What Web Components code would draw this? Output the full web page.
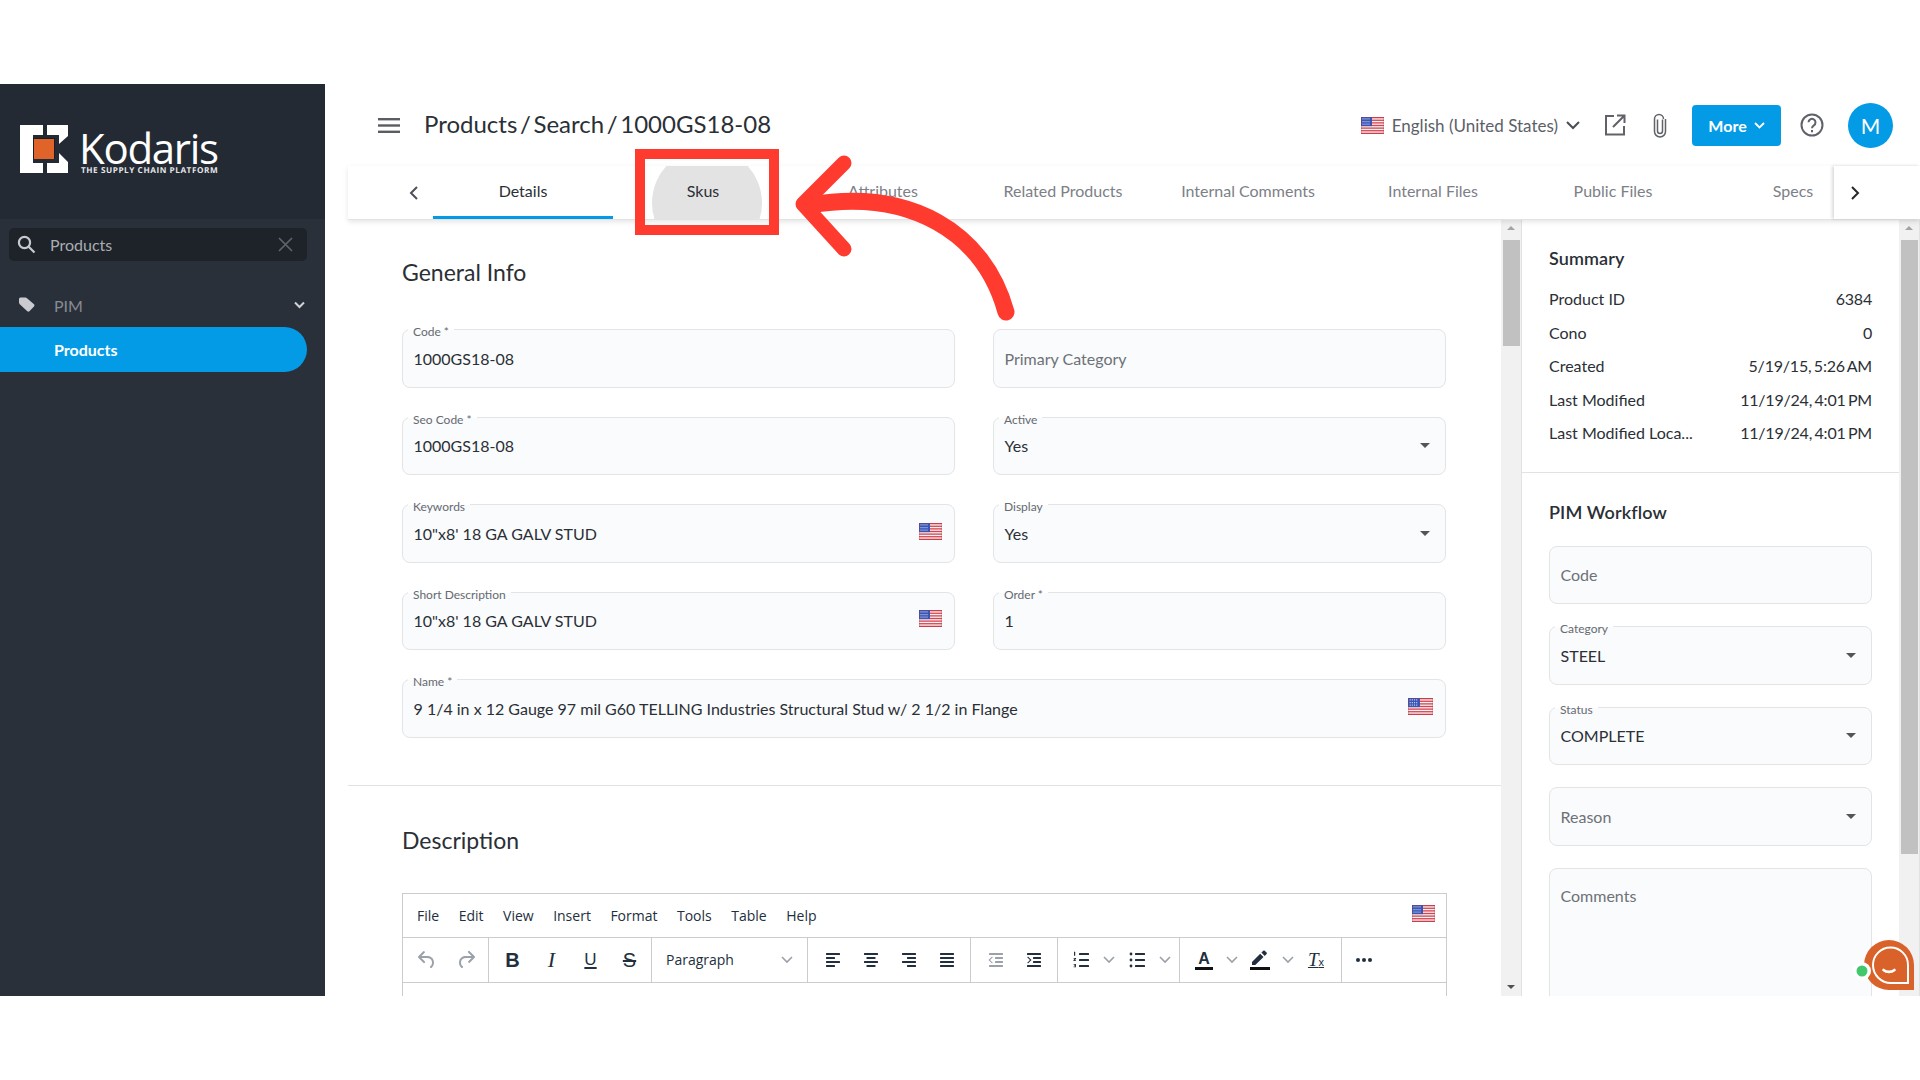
<!DOCTYPE html>
<html>
<head>
<meta charset="utf-8">
<title>Kodaris</title>
<style>
  html, body { margin: 0; padding: 0; background: #fff; }
  body { padding: 84px 0; font-family: "Open Sans", "Liberation Sans", sans-serif; overflow: hidden; }
</style>
</head>
<body>
<kd-app>
  <kd-sidebar slot="side"></kd-sidebar>
  <kd-header slot="head" title="Products / Search / 1000GS18-08"></kd-header>
  <kd-tabs slot="head"></kd-tabs>
  <kd-scroll slot="left" thumb-top="20" thumb-height="106" width="1174">
    <kd-general></kd-general>
  </kd-scroll>
  <kd-scroll slot="right" thumb-top="20" thumb-height="614" width="398">
    <kd-summary></kd-summary>
  </kd-scroll>
  <kd-annotation slot="over"></kd-annotation>
  <kd-bot slot="over"></kd-bot>
</kd-app>

<script>
  const FONT = '"Lato", "Open Sans", sans-serif';

  // small flag, used in a few places
  const flag = (w, h) => {
    let stripes = '';
    for (let i = 0; i < 7; i++) {
      stripes += `<rect y="${i * 2}" width="23" height="1" fill="#d9434e"/>`;
    }
    return `<svg width="${w}" height="${h}" viewBox="0 0 23 13" preserveAspectRatio="none">
      <rect width="23" height="13" rx="1" fill="#f4f4f6"/>${stripes}
      <rect width="11" height="7" fill="#3a55b4"/>
      <path d="M1.5 1.5h8M1.5 3.5h8M1.5 5.5h8" stroke="#c5d0ee" stroke-width=".9" stroke-dasharray="1 1"/>
      <rect x=".25" y=".25" width="22.5" height="12.5" rx="1" fill="none" stroke="#a8343c" stroke-opacity=".55" stroke-width=".5"/>
    </svg>`;
  };

  customElements.define('kd-app', class extends HTMLElement {
    constructor() {
      super();
      this.attachShadow({ mode: 'open' }).innerHTML = `
        <style>
          :host { display: flex; position: relative; height: 912px; overflow: hidden; background: #fff; }
          .main { flex: 1; min-width: 0; display: flex; flex-direction: column; }
          .body { flex: 1; min-height: 0; display: flex; padding-left: 23px; }
        </style>
        <slot name="side"></slot>
        <div class="main">
          <slot name="head"></slot>
          <div class="body">
            <slot name="left"></slot>
            <slot name="right"></slot>
          </div>
        </div>
        <slot name="over"></slot>`;
    }
  });

  customElements.define('kd-sidebar', class extends HTMLElement {
    constructor() {
      super();
      this.attachShadow({ mode: 'open' }).innerHTML = `
        <style>
          :host { display: block; flex: none; width: 325px; background: #2a303a; font-family: ${FONT}; }
          .logo { height: 135px; background: #242a33; display: flex; align-items: flex-start; padding: 41px 0 0 20px; box-sizing: border-box; gap: 11px; }
          .brand { color: #fff; }
          .brand b { display: block; font: 400 42px/34px "Open Sans", sans-serif; letter-spacing: -1.3px; margin-top: 6px; }
          .brand i { display: block; font: 700 8.2px/9px "Open Sans", sans-serif; font-style: normal; text-rendering: geometricPrecision; letter-spacing: .55px; margin: 1px 0 0 2px; color: #e3e5e7; white-space: nowrap; }
          .search { margin: 9px 18px 0 9px; height: 33px; background: #1e2229; border-radius: 5px; display: flex; align-items: center; color: #a9adb3; font-size: 16px; padding: 0 14px 0 8px; }
          .search span { flex: 1; margin-left: 14px; }
          .pim { height: 44px; margin-top: 22px; display: flex; align-items: center; padding: 0 20px 0 18px; color: #878b92; font-size: 16px; }
          .pim span { flex: 1; margin-left: 18px; }
          .item { height: 45px; margin-right: 18px; background: #039be5; border-radius: 0 23px 23px 0; color: #fff; font-weight: 700; font-size: 16px; display: flex; align-items: center; padding-left: 54px; }
        </style>
        <div class="logo">
          <svg width="48" height="48" viewBox="20 125 48 48" fill="#fff">
            <path d="M20 125h23v10H33v28h10v10H20z"/>
            <path d="M47 125h21v11l-9 8v-9H47z"/>
            <path d="M59 153l9 9v11H47v-10h12z"/>
            <path d="M33 138h22v21H33z" fill="#1a1f27"/>
            <rect x="34" y="139" width="20" height="20" fill="#e0642a"/>
          </svg>
          <div class="brand"><b>Kodaris</b><i>THE SUPPLY CHAIN PLATFORM</i></div>
        </div>
        <div class="search">
          <svg width="19" height="19" viewBox="0 0 19 19" fill="none" stroke="#c6c9cd" stroke-width="2.2"><circle cx="7.5" cy="7.5" r="5.6"/><path d="M11.5 11.5l6 6"/></svg>
          <span>Products</span>
          <svg width="15" height="15" viewBox="0 0 15 15" fill="none" stroke="#5f636a" stroke-width="1.7"><path d="M1 1l13 13M14 1L1 14"/></svg>
        </div>
        <div class="pim">
          <svg width="18" height="16" viewBox="0 0 18 16"><path d="M1 5.5V2a1.5 1.5 0 0 1 1.5-1.5h5c.5 0 .9.2 1.2.5l7.3 6.3c.6.6.6 1.5 0 2.1l-4.6 4.9c-.6.6-1.5.6-2.1 0L1.500 7z" fill="#c9cbd0"/></svg>
          <span>PIM</span>
          <svg width="11" height="8" viewBox="0 0 11 8" fill="none" stroke="#d0d2d5" stroke-width="2"><path d="M1 1.500l4.500 4.500L10 1.500"/></svg>
        </div>
        <div class="item">Products</div>`;
    }
  });

  customElements.define('kd-header', class extends HTMLElement {
    constructor() {
      super();
      this.attachShadow({ mode: 'open' }).innerHTML = `
        <style>
          :host { display: flex; align-items: center; height: 82px; padding: 0 27px 0 53px; font-family: ${FONT}; color: #2b2f36; }
          h1 { font-size: 24px; font-weight: 400; margin: -3px 0 0 24px; word-spacing: -3.5px; }
          .actions { margin-left: auto; display: flex; align-items: center; }
          .lang { display: flex; align-items: center; font-size: 17px; color: #5c6068; margin-right: 24px; }
          .lang span { margin: 0 8px; }
          .more { width: 89px; height: 41px; background: #039be5; border-radius: 4px; color: #fff; font-weight: 700; font-size: 16px; display: flex; align-items: center; justify-content: center; gap: 7px; margin: 0 19px 0 25px; }
          .av { width: 45px; height: 45px; border-radius: 50%; background: #039be5; color: #fff; display: flex; align-items: center; justify-content: center; font-size: 21px; margin-left: 24px; }
          svg { display: block; }
        </style>
        <svg width="22" height="15" viewBox="0 0 22 15" fill="#5a5d63"><rect width="22" height="2.400"/><rect y="6.300" width="22" height="2.400"/><rect y="12.600" width="22" height="2.400"/></svg>
        <h1>${this.getAttribute('title')}</h1>
        <div class="actions">
          <div class="lang">${flag(23, 17)}<span>English (United States)</span>
            <svg width="14" height="9" viewBox="0 0 14 9" fill="none" stroke="#4a4d53" stroke-width="2"><path d="M1 1l6 6 6-6"/></svg>
          </div>
          <svg width="22" height="22" viewBox="0 0 22 22" fill="none" stroke="#5f6268" stroke-width="2"><path d="M10 2H2v18.500h18V12"/><path d="M9 13L20.500 1.500M13 1.500h7.500V9"/></svg>
          <svg width="14" height="25" viewBox="0 0 14 25" fill="none" stroke="#5f6268" stroke-width="1.500" style="margin-left:27px"><path d="M9.500 6.500V18a2.500 2.500 0 0 1-5 0V6.500"/><path d="M12.500 6v12.500a5.500 5.500 0 0 1-11 0V6a4.500 4.500 0 0 1 9-0"/></svg>
          <div class="more">More <svg width="11" height="7" viewBox="0 0 11 7" fill="none" stroke="#fff" stroke-width="1.800"><path d="M1 1l4.500 4.500L10 1"/></svg></div>
          <svg width="24" height="24" viewBox="0 0 24 24" fill="none" stroke="#5f6268" stroke-width="2"><circle cx="12" cy="12" r="10.500"/><path d="M8.500 9.300a3.500 3.500 0 1 1 5.400 3c-1.200.8-1.900 1.400-1.900 2.900"/><path d="M12 17v2.200"/></svg>
          <div class="av">M</div>
        </div>`;
    }
  });

  customElements.define('kd-tabs', class extends HTMLElement {
    constructor() {
      super();
      const names = ['Details', 'Skus', 'Attributes', 'Related Products', 'Internal Comments', 'Internal Files', 'Public Files', 'Specs'];
      this.attachShadow({ mode: 'open' }).innerHTML = `
        <style>
          :host { display: flex; position: relative; z-index: 2; height: 54px; margin-left: 23px; background: #fff; font-family: ${FONT}; font-size: 16px; color: #7d8087; box-shadow: 0 2px 5px rgba(0,0,0,.1); border-bottom: 1px solid #e3e3e3; box-sizing: border-box; }
          .back { width: 85px; flex: none; display: flex; align-items: center; justify-content: center; padding-left: 46px; box-sizing: border-box; }
          .strip { display: flex; overflow: hidden; flex: 1; min-width: 0; }
          .tab { flex: 0 0 180px; display: flex; align-items: center; justify-content: center; position: relative; overflow: hidden; box-sizing: border-box; }
          .tab.wide { flex-basis: 190px; }
          .tab span { position: relative; top: -2.500px; }
          .on { color: #2b2f36; border-bottom: 3px solid #039be5; }
          .on span { top: -1px; }
          .hover { color: #2b2f36; }
          .hover::before { content: ""; position: absolute; left: 39px; top: -18px; width: 110px; height: 110px; border-radius: 50%; background: #e3e3e3; }
          .next { width: 86px; flex: none; display: flex; align-items: center; justify-content: center; padding-right: 44px; box-sizing: border-box; box-shadow: -2px 0 3px rgba(0,0,0,.14); background: #fff; position: relative; }
        </style>
        <div class="back"><svg width="10" height="14" viewBox="0 0 10 14" fill="none" stroke="#4d5056" stroke-width="2"><path d="M8 1L2 7l6 6"/></svg></div>
        <div class="strip">${names.map((n, i) => `<div class="tab ${i === 0 ? 'on' : ''} ${i === 1 ? 'hover' : ''} ${i === 4 ? 'wide' : ''}"><span>${n}</span></div>`).join('')}</div>
        <div class="next"><svg width="10" height="14" viewBox="0 0 10 14" fill="none" stroke="#26282c" stroke-width="2"><path d="M2 1l6 6-6 6"/></svg></div>`;
    }
  });

  // a pane with an always visible, old style scrollbar
  customElements.define('kd-scroll', class extends HTMLElement {
    constructor() {
      super();
      const top = this.getAttribute('thumb-top');
      const h = this.getAttribute('thumb-height');
      this.attachShadow({ mode: 'open' }).innerHTML = `
        <style>
          :host { display: flex; flex: none; width: ${this.getAttribute('width')}px; height: 100%; overflow: hidden; }
          .content { flex: 1; min-width: 0; overflow: hidden; }
          .bar { flex: none; width: 21px; box-sizing: border-box; background: #f1f1f1; padding: 0 2px; position: relative; border-right: 1px solid #e2e2e2; }
          .thumb { width: 17px; background: #c1c1c1; margin-top: ${top}px; height: ${h}px; }
          .up, .down { position: absolute; left: 6px; width: 0; height: 0; border: 4.500px solid transparent; }
          .up { top: 2px; border-bottom-color: #a3a3a3; }
          .down { bottom: 3px; border-top-color: #505050; }
        </style>
        <div class="content"><slot></slot></div>
        <div class="bar"><i class="up"></i><div class="thumb"></div><i class="down"></i></div>`;
    }
  });

  customElements.define('kd-field', class extends HTMLElement {
    constructor() {
      super();
      const label = this.getAttribute('label');
      const value = this.getAttribute('value');
      const hint = this.getAttribute('hint');
      const tall = this.hasAttribute('tall');
      this.attachShadow({ mode: 'open' }).innerHTML = `
        <style>
          :host { display: block; position: relative; height: ${tall ? 160 : 58.5}px; box-sizing: border-box; background: #fafbfc; border: 1px solid #e3e4e6; border-radius: 8px; font-family: ${FONT}; font-size: 16px; color: #2b2f36; }
          .label { position: absolute; left: 5px; top: -6px; padding: 0 5px; font-size: 12px; line-height: 15px; color: #666a71; background: linear-gradient(#fff 40%, #fafbfc 40%); }
          .row { display: flex; align-items: center; height: 56px; padding: 0 10px 0 10.500px; gap: 10px; }
          .val { flex: 1; white-space: nowrap; }
          .hint { color: #6d7178; }
          .tall { align-items: flex-start; padding-top: 17px; height: auto; }
          .caret { width: 0; height: 0; border: 5px solid transparent; border-top-color: #555; border-bottom: 0; margin-right: 5px; }
          .fl { margin-top: -1px; margin-right: 2px; }
        </style>
        ${label ? `<div class="label">${label}</div>` : ''}
        <div class="row ${tall ? 'tall' : ''}">
          <div class="val ${hint ? 'hint' : ''}">${value || hint}</div>
          ${this.hasAttribute('flag') ? `<div class="fl">${flag(this.getAttribute('flag') === 'l' ? 25 : 23, 17)}</div>` : ''}
          ${this.hasAttribute('select') ? '<i class="caret"></i>' : ''}
        </div>`;
    }
  });

  customElements.define('kd-editor', class extends HTMLElement {
    constructor() {
      super();
      const ink = '#222f3e';
      const off = '#9aa1a9';
      const svg = (body, color = ink) => `<svg width="24" height="24" viewBox="0 0 24 24" fill="${color}">${body}</svg>`;
      const lines = (rows) => rows.map(([x, y, w]) => `<rect x="${x}" y="${y}" width="${w}" height="2" rx=".5"/>`).join('');
      const btn = (inner, w = 38) => `<span class="btn" style="width:${w}px">${inner}</span>`;
      const chev = () => `<span class="btn" style="width:20px"><svg width="12" height="8" viewBox="0 0 12 8" fill="none" stroke="#9aa1a9" stroke-width="1.600"><path d="M1 1l5 5 5-5"/></svg></span>`;
      const groups = [
        { w: 86, p: 4, html:
          btn(svg('<path d="M6.400 8H12c3.700 0 6.200 2 6.800 5.100.6 2.700-.4 5.600-2.300 6.800a1 1 0 0 1-1-1.800c1.100-.6 1.800-2.700 1.400-4.600-.5-2.100-2.100-3.500-4.900-3.500H6.400l3.300 3.300a1 1 0 1 1-1.400 1.400l-5-5a1 1 0 0 1 0-1.400l5-5a1 1 0 0 1 1.400 1.400L6.400 8z"/>', off), 39) +
          btn(svg('<path d="M17.600 10H12c-2.800 0-4.400 1.400-4.900 3.500-.4 2 .3 4 1.400 4.600a1 1 0 1 1-1 1.800c-2-1.200-2.900-4.100-2.300-6.800.6-3 3-5.100 6.800-5.100h5.600l-3.300-3.300a1 1 0 1 1 1.400-1.400l5 5a1 1 0 0 1 0 1.400l-5 5a1 1 0 0 1-1.400-1.400l3.300-3.300z"/>', off), 39) },
        { w: 163, p: 4, html:
          btn('<b class="g" style="font-size:20px">B</b>', 39) +
          btn('<i class="g" style="font:italic 400 22px \'Liberation Serif\',serif">I</i>', 39) +
          btn('<span class="g u" style="font-size:17px;font-weight:400">U</span>', 39) +
          btn('<span class="g s" style="font-size:20px">S</span>', 39) },
        { w: 156, p: 14, html: `<span class="para">Paragraph</span><svg width="12" height="8" viewBox="0 0 12 8" fill="none" stroke="#9aa1a9" stroke-width="1.600"><path d="M1 1l5 5 5-5"/></svg>` },
        { w: 163, p: 6, html:
          btn(svg(lines([[5, 5, 14], [5, 9, 9], [5, 13, 14], [5, 17, 9]]))) +
          btn(svg(lines([[5, 5, 14], [7.5, 9, 9], [5, 13, 14], [7.5, 17, 9]]))) +
          btn(svg(lines([[5, 5, 14], [10, 9, 9], [5, 13, 14], [10, 17, 9]]))) +
          btn(svg(lines([[5, 5, 14], [5, 9, 14], [5, 13, 14], [5, 17, 14]]))) },
        { w: 87, p: 6, html:
          btn(svg(lines([[5, 5, 14], [11, 9, 8], [11, 13, 8], [5, 17, 14]]) + '<path d="M9 9l-3 3 3 3-1.200.2L4.500 12l3.300-3.200z"/>', off)) +
          btn(svg(lines([[5, 5, 14], [11, 9, 8], [11, 13, 8], [5, 17, 14]]) + '<path d="M5 9l3 3-3 3 1.200.2L9.500 12 6.200 8.800z"/>')) },
        { w: 122, p: 5, html:
          btn(svg(lines([[10, 5, 10], [10, 11, 10], [10, 17, 10]]) + '<path d="M5 3.800h1.200v4H5zM4.600 10h2.400v1l-1.400 1.300H7V13H4.500v-1l1.400-1.300H4.600zM4.600 16h2.400v3.200H4.600v-.7h1.600v-.6H5.200v-.6h1v-.6H4.600z"/>'), 36) + chev() +
          btn(svg(lines([[10, 5, 10], [10, 11, 10], [10, 17, 10]]) + '<circle cx="6" cy="6" r="1.400"/><circle cx="6" cy="12" r="1.400"/><circle cx="6" cy="18" r="1.400"/>'), 36) + chev() },
        { w: 162, p: 6, html:
          btn('<span class="g bar" style="font-size:16px;font-weight:600">A</span>', 36) + chev() +
          btn(svg('<rect x="2" y="19" width="20" height="3" fill="#111"/><path d="M4 16.500v-2.600l8.200-8.200 3.300 3.300L7.300 17H4zM13.400 4.600l1.900-1.900c.4-.4 1-.4 1.400 0l1.900 1.900c.4.400.4 1 0 1.400l-1.900 1.900z"/>'), 36) + chev() +
          btn('<span class="g tx"><i>T</i><small>x</small></span>', 36) },
        { w: 60, p: 4, html: btn(svg('<circle cx="6" cy="12" r="2"/><circle cx="12" cy="12" r="2"/><circle cx="18" cy="12" r="2"/>'), 36) }
      ];
      const menus = ['File', 'Edit', 'View', 'Insert', 'Format', 'Tools', 'Table', 'Help'];
      this.attachShadow({ mode: 'open' }).innerHTML = `
        <style>
          :host { display: block; box-sizing: border-box; border: 1px solid #ccc; border-bottom: 0; height: 120px; font-family: "Open Sans", sans-serif; color: ${ink}; }
          .menu { height: 43.500px; display: flex; align-items: center; padding: 0 11px 0 14px; gap: 19.5px; font-size: 14px; border-bottom: 1px solid #ccc; box-sizing: border-box; }
          .fl { margin-left: auto; margin-top: -3px; }
          .tools { height: 45px; display: flex; border-bottom: 1px solid #ccc; box-sizing: border-box; }
          .group { flex: none; display: flex; align-items: center; box-sizing: border-box; border-right: 1px solid #ccc; }
          .group:last-child { border-right: 0; }
          .btn { display: flex; flex: none; align-items: center; justify-content: center; height: 100%; }
          .para { flex: 1; font-size: 14px; }
          .g { font-family: "Liberation Sans", sans-serif; color: ${ink}; line-height: 1; }
          .u { text-decoration: underline; text-underline-offset: 2px; text-decoration-thickness: 2px; }
          .s { text-decoration: line-through; }
          .bar { border-bottom: 3px solid #111; padding: 0 3px; line-height: 17px; }
          .tx { font-size: 19px; position: relative; text-decoration: underline; }
          .tx small { font-size: 11px; }
          .tx i { font-family: "Liberation Serif", serif; }
          svg { display: block; }
        </style>
        <div class="menu">${menus.map(m => `<span>${m}</span>`).join('')}<span class="fl">${flag(23, 17)}</span></div>
        <div class="tools">${groups.map(g => `<div class="group" style="width:${g.w}px;padding:0 ${g.p}px">${g.html}</div>`).join('')}</div>`;
    }
  });

  customElements.define('kd-general', class extends HTMLElement {
    constructor() {
      super();
      this.attachShadow({ mode: 'open' }).innerHTML = `
        <style>
          :host { display: block; font-family: ${FONT}; color: #2b2f36; }
          h2 { font-size: 23px; font-weight: 400; line-height: 30px; margin: 0; }
          .sec { padding: 37px 54px 47px; border-bottom: 1px solid #e2e2e2; }
          .grid { display: grid; grid-template-columns: 553px 453px; column-gap: 38px; row-gap: 29px; margin-top: 42px; }
          .wide { grid-column: span 2; }
          .desc { padding: 39px 54px 0; }
          kd-editor { margin-top: 38.500px; }
        </style>
        <div class="sec">
          <h2>General Info</h2>
          <div class="grid">
            <kd-field label="Code *" value="1000GS18-08"></kd-field>
            <kd-field hint="Primary Category"></kd-field>
            <kd-field label="Seo Code *" value="1000GS18-08"></kd-field>
            <kd-field label="Active" value="Yes" select></kd-field>
            <kd-field label="Keywords" value="10&quot;x8' 18 GA GALV STUD" flag></kd-field>
            <kd-field label="Display" value="Yes" select></kd-field>
            <kd-field label="Short Description" value="10&quot;x8' 18 GA GALV STUD" flag></kd-field>
            <kd-field label="Order *" value="1"></kd-field>
            <kd-field class="wide" label="Name *" value="9 1/4 in x 12 Gauge 97 mil G60 TELLING Industries Structural Stud w/ 2 1/2 in Flange" flag="l"></kd-field>
          </div>
        </div>
        <div class="desc">
          <h2>Description</h2>
          <kd-editor></kd-editor>
        </div>`;
    }
  });

  customElements.define('kd-summary', class extends HTMLElement {
    constructor() {
      super();
      const rows = [['Product ID', '6384'], ['Cono', '0'], ['Created', '5/19/15, 5:26 AM'], ['Last Modified', '11/19/24, 4:01 PM'], ['Last Modified Loca...', '11/19/24, 4:01 PM']];
      this.attachShadow({ mode: 'open' }).innerHTML = `
        <style>
          :host { display: block; font-family: ${FONT}; color: #2b2f36; font-size: 16px; }
          h3 { font-size: 18px; font-weight: 600; margin: 0; line-height: 22px; letter-spacing: .1px; }
          .sum { padding: 27px 27px 22px; border-bottom: 1px solid #e2e2e2; }
          .row { display: flex; justify-content: space-between; height: 33.500px; align-items: center; }
          .row span:last-child { letter-spacing: -.2px; word-spacing: -1.500px; }
          .rows { margin-top: 13px; }
          .wf { padding: 28px 27px 0; display: flex; flex-direction: column; gap: 22px; }
          .wf h3 { margin-bottom: 1px; }
        </style>
        <div class="sum">
          <h3>Summary</h3>
          <div class="rows">${rows.map(r => `<div class="row"><span>${r[0]}</span><span>${r[1]}</span></div>`).join('')}</div>
        </div>
        <div class="wf">
          <h3>PIM Workflow</h3>
          <kd-field hint="Code"></kd-field>
          <kd-field label="Category" value="STEEL" select></kd-field>
          <kd-field label="Status" value="COMPLETE" select></kd-field>
          <kd-field hint="Reason" select></kd-field>
          <kd-field hint="Comments" tall></kd-field>
        </div>`;
    }
  });

  // red callout drawn over the tabs
  customElements.define('kd-annotation', class extends HTMLElement {
    constructor() {
      super();
      this.attachShadow({ mode: 'open' }).innerHTML = `
        <style>
          :host { position: absolute; left: 0; top: 0; width: 1920px; height: 912px; pointer-events: none; z-index: 5; }
          .box { position: absolute; left: 635px; top: 65px; width: 144px; height: 86px; box-sizing: border-box; border: 10px solid #ff3b30; }
          svg { position: absolute; left: 0; top: 0; }
        </style>
        <div class="box"></div>
        <svg width="1920" height="912" fill="none" stroke="#ff3b30" stroke-linecap="round" stroke-linejoin="round">
          <path d="M1006 228C984 148 910 104 810 121" stroke-width="17"/>
          <path d="M844 79L803 120L844 165" stroke-width="15"/>
        </svg>`;
    }
  });

  customElements.define('kd-bot', class extends HTMLElement {
    constructor() {
      super();
      this.attachShadow({ mode: 'open' }).innerHTML = `
        <style>
          :host { position: absolute; left: 1848px; top: 852px; width: 70px; height: 56px; z-index: 4; }
        </style>
        <svg width="70" height="56" viewBox="0 0 70 56">
          <path d="M16 29a25 25 0 0 1 50 0v25H41a25 25 0 0 1-25-25z" fill="#d9622b"/>
          <path d="M25 29a17.500 17.500 0 0 1 35 0v18H43a18 18 0 0 1-18-18z" fill="none" stroke="#fff" stroke-width="2"/>
          <path d="M35.500 34c3 2.500 8 2.500 11 0" fill="none" stroke="#fff" stroke-width="2.600" stroke-linecap="round"/>
          <circle cx="14" cy="35" r="9" fill="#fff"/>
          <circle cx="14" cy="35" r="5.500" fill="#43c76d"/>
        </svg>`;
    }
  });
</script>
</body>
</html>
